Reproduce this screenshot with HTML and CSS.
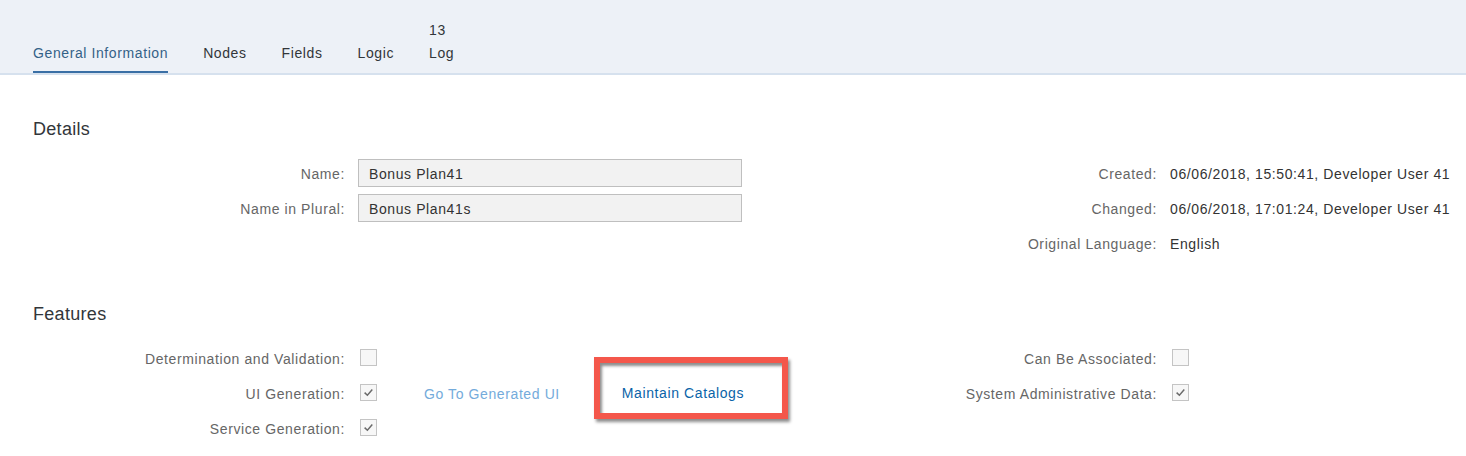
FILE: index.html
```html
<!DOCTYPE html>
<html lang="en">
<head>
<meta charset="utf-8">
<title>General Information</title>
<link rel="stylesheet" href="styles.css">
</head>
<body>
<div class="page">
  <nav class="tabbar">
    <div class="tab selected"><span class="tab-text">General Information</span></div>
    <div class="tab"><span class="tab-text">Nodes</span></div>
    <div class="tab"><span class="tab-text">Fields</span></div>
    <div class="tab"><span class="tab-text">Logic</span></div>
    <div class="tab"><span class="tab-count">13</span><span class="tab-text">Log</span></div>
  </nav>

  <section class="section section-details">
    <h2 class="section-title">Details</h2>
    <div class="form-grid">
      <div class="label l-col">Name:</div>
      <div class="v-col"><div class="input">Bonus Plan41</div></div>
      <div class="label r-label">Created:</div>
      <div class="value r-value">06/06/2018, 15:50:41, Developer User 41</div>

      <div class="label l-col">Name in Plural:</div>
      <div class="v-col"><div class="input">Bonus Plan41s</div></div>
      <div class="label r-label">Changed:</div>
      <div class="value r-value">06/06/2018, 17:01:24, Developer User 41</div>

      <div class="label r-label row3">Original Language:</div>
      <div class="value r-value row3">English</div>
    </div>
  </section>

  <section class="section section-features">
    <h2 class="section-title">Features</h2>
    <div class="form-grid features-grid">
      <div class="label l-col">Determination and Validation:</div>
      <div class="v-col"><span class="checkbox"></span></div>
      <div class="label r-label">Can Be Associated:</div>
      <div class="r-value"><span class="checkbox"></span></div>

      <div class="label l-col">UI Generation:</div>
      <div class="v-col links">
        <span class="checkbox checked"><svg viewBox="0 0 17 17" width="17" height="17"><path d="M4.6 8.6 L7.4 11.2 L12.3 5.6" fill="none" stroke="#6a6a6a" stroke-width="1.5"/></svg></span>
        <a class="link disabled">Go To Generated UI</a>
        <span class="annot"><a class="link">Maintain Catalogs</a></span>
      </div>
      <div class="label r-label">System Administrative Data:</div>
      <div class="r-value"><span class="checkbox checked"><svg viewBox="0 0 17 17" width="17" height="17"><path d="M4.6 8.6 L7.4 11.2 L12.3 5.6" fill="none" stroke="#6a6a6a" stroke-width="1.5"/></svg></span></div>

      <div class="label l-col">Service Generation:</div>
      <div class="v-col"><span class="checkbox checked"><svg viewBox="0 0 17 17" width="17" height="17"><path d="M4.6 8.6 L7.4 11.2 L12.3 5.6" fill="none" stroke="#6a6a6a" stroke-width="1.5"/></svg></span></div>
    </div>
  </section>
</div>
</body>
</html>
```

FILE: styles.css
```css
* { box-sizing: border-box; }

html, body {
  margin: 0;
  padding: 0;
  background: #ffffff;
}

body {
  font-family: "Liberation Sans", Arial, sans-serif;
  font-size: 14px;
  letter-spacing: 0.6px;
  color: #333333;
  width: 1466px;
  height: 456px;
  overflow: hidden;
}

.tabbar {
  display: flex;
  align-items: flex-end;
  gap: 35px;
  height: 75px;
  padding-left: 33px;
  background: #edf1f7;
  border-bottom: 2px solid #d6e1ee;
}

.tab {
  display: flex;
  flex-direction: column;
  gap: 3px;
  padding-bottom: 8px;
  border-bottom: 2px solid transparent;
  line-height: 20px;
  color: #32363a;
}

.tab.selected {
  color: #346187;
  border-bottom-color: #3a6fa5;
}

.tab-count {
  color: #32363a;
}

.section-title {
  margin: 0;
  padding-left: 33px;
  font-size: 18px;
  font-weight: normal;
  line-height: 24px;
  letter-spacing: 0.3px;
  color: #32363a;
}

.section-details {
  padding-top: 42px;
}

.section-features {
  padding-top: 45px;
}

.form-grid {
  display: grid;
  grid-template-columns: 312px 384px 102px 287px 281px;
  grid-template-rows: 28px 28px 28px;
  column-gap: 13px;
  row-gap: 7px;
  padding: 0 15px 0 33px;
  margin-top: 18px;
  align-items: center;
}

.label {
  color: #666666;
  text-align: right;
  white-space: nowrap;
  padding-top: 1px;
}

.l-col { grid-column: 1; }
.v-col { grid-column: 2; }
.r-label { grid-column: 4; }
.r-value { grid-column: 5; }
.row3 { grid-row: 3; }

.value {
  color: #333333;
  white-space: nowrap;
  padding-top: 1px;
}

.input {
  height: 28px;
  line-height: 28px;
  padding: 0 10px;
  background: #f2f2f2;
  border: 1px solid #bfbfbf;
  color: #333333;
}

.checkbox {
  display: block;
  width: 17px;
  height: 17px;
  margin-left: 2px;
  margin-bottom: 1px;
  background: #f7f7f7;
  border: 1.5px solid #c4c4c4;
  position: relative;
  flex: none;
}

.checkbox svg {
  position: absolute;
  left: -1.5px;
  top: -1.5px;
}

.links {
  grid-column: 2 / 4;
  display: flex;
  align-items: center;
  height: 28px;
}

.link {
  white-space: nowrap;
  color: #0a63a8;
  line-height: 18px;
}

.link.disabled {
  color: #74abdb;
  margin-left: 47px;
  margin-right: 34px;
  padding-top: 1px;
}

.annot {
  display: block;
  flex: none;
  width: 194px;
  height: 62px;
  padding: 21px 0 0 22px;
  border: 6px solid #f4574b;
  margin-bottom: 10px;
  background: #ffffff;
  box-shadow: 2px 3px 3px rgba(0, 0, 0, 0.45), inset 2px 3px 3px rgba(0, 0, 0, 0.45);
}
```
